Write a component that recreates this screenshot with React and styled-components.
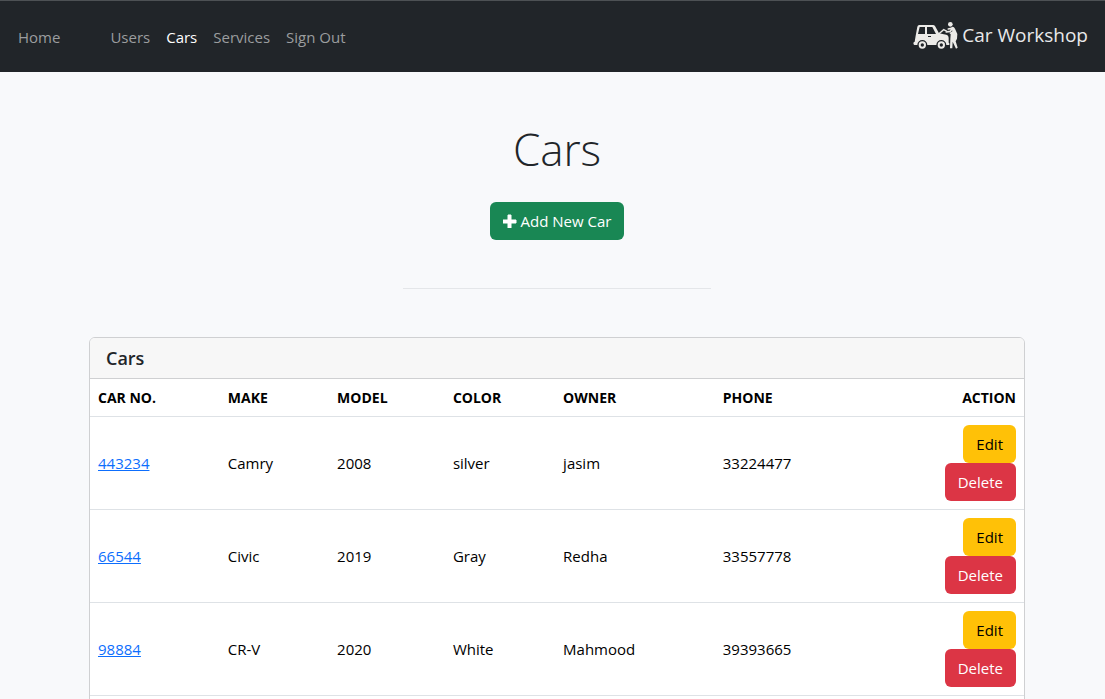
import React from "react";
import styled, { createGlobalStyle } from "styled-components";

const GlobalStyle = createGlobalStyle`
  *, *::before, *::after { box-sizing: border-box; }
  body {
    margin: 0;
    background: #f8f9fb;
    color: #212529;
    font-family: "Segoe UI", "Open Sans", "Noto Sans", sans-serif;
    font-size: 15px;
    line-height: 24px;
    overflow-x: hidden;
  }
`;

const Navbar = styled.nav`
  display: flex;
  align-items: center;
  justify-content: space-between;
  height: 72px;
  padding: 0 17px 0 10px;
  background: #212529;
  border-top: 1px solid #4d5154;
`;

const NavList = styled.ul`
  display: flex;
  margin: 0;
  padding: 0;
  list-style: none;
`;

const NavItem = styled.li`
  margin-right: ${(p) => (p.$spaced ? "34px" : "0")};
`;

const NavLink = styled.a`
  display: block;
  padding: 8px;
  color: ${(p) => (p.$active ? "#ffffff" : "#9b9d9f")};
  text-decoration: none;
`;

const Brand = styled.a`
  display: flex;
  align-items: center;
  gap: 4px;
  padding-bottom: 4px;
  color: #e9e9ea;
  font-size: 19px;
  line-height: 28px;
  text-decoration: none;
`;

const Main = styled.main`
  padding: 48px 80px 48px 89px;
`;

const Hero = styled.header`
  display: flex;
  flex-direction: column;
  align-items: center;
`;

const Title = styled.h1`
  margin: 0 0 24px;
  font-size: 44px;
  font-weight: 300;
  line-height: 58px;
`;

const Button = styled.button`
  display: inline-flex;
  align-items: center;
  justify-content: center;
  gap: 4px;
  height: 38px;
  padding: 0 13px;
  border: 0;
  border-radius: 6px;
  background: ${(p) => p.$bg};
  color: ${(p) => p.$color || "#ffffff"};
  font: inherit;
  cursor: pointer;
`;

const Divider = styled.hr`
  width: 33%;
  margin: 48px 0;
  border: 0;
  border-top: 1px solid #e4e6e9;
`;

const Card = styled.section`
  overflow: hidden;
  padding-bottom: 16px;
  border: 1px solid #cfd0d2;
  border-radius: 6px;
  background: #ffffff;
`;

const CardTitle = styled.h2`
  margin: 0;
  padding: 8px 16px;
  border-bottom: 1px solid #cfd0d2;
  background: #f7f7f7;
  font-size: 18px;
  font-weight: 600;
  line-height: 24px;
`;

const Table = styled.table`
  width: 100%;
  border-collapse: collapse;
  table-layout: fixed;
  color: #000000;
`;

const Col = styled.col`
  width: ${(p) => p.$width};
`;

const HeadCell = styled.th`
  padding: 7px 8px 6px;
  border-bottom: 1px solid #dee2e6;
  font-size: 14px;
  font-weight: 700;
  text-align: ${(p) => (p.$end ? "right" : "left")};
`;

const Cell = styled.td`
  padding: 8px;
  border-bottom: 1px solid #dee2e6;
`;

const CarLink = styled.a`
  color: #0d6efd;
`;

const Actions = styled.div`
  display: flex;
  flex-direction: column;
  align-items: flex-end;
`;

const WorkshopLogo = () => (
  <svg width="46" height="28" viewBox="35 36 138 84" aria-hidden="true">
    <path
      fill="#ecebe8"
      fillRule="evenodd"
      d="M57 48H98Q102 48 104 51L116 73L138 77Q145 79 145 86V101L147 103V108H138A15 15 0 0 0 108 108H81A15 15 0 0 0 51 108H42Q39 107 39 101L43 98L46 80L51 53Q52 48 57 48ZM58 54L53 75H74V54ZM80 54V75H107L96 54ZM83 81V84H92V81Z"
    />
    <circle cx="66" cy="108" r="8" fill="none" stroke="#ecebe8" strokeWidth="6" />
    <circle cx="123" cy="108" r="8" fill="none" stroke="#ecebe8" strokeWidth="6" />
    <path d="M115 75L130 62L140 67" fill="none" stroke="#ecebe8" strokeWidth="4" />
    <circle cx="150" cy="46" r="7" fill="#ecebe8" />
    <path
      fill="none"
      stroke="#ecebe8"
      strokeWidth="5"
      strokeLinecap="round"
      strokeLinejoin="round"
      d="M157 58L150 67L138 69M144 60L153 58"
    />
    <path
      fill="#ecebe8"
      d="M153 54Q161 52 164 59L171 75L170 89L166 97L172 116L167 119L157 98L156 118H149L150 89L151 76L147 72L156 67Z"
    />
  </svg>
);

const PlusIcon = () => (
  <svg width="14" height="14" viewBox="0 0 14 14" aria-hidden="true">
    <path d="M5 1h3v5h5v3H8v5H5V9H0V6h5z" fill="#fff" stroke="#fff" strokeLinejoin="round" />
  </svg>
);

const links = ["Home", "Users", "Cars", "Services", "Sign Out"];

const columns = [
  { label: "CAR NO.", width: "13.9%" },
  { label: "MAKE", width: "11.7%" },
  { label: "MODEL", width: "12.4%" },
  { label: "COLOR", width: "11.8%" },
  { label: "OWNER", width: "17.1%" },
  { label: "PHONE", width: "20%" },
  { label: "ACTION", width: "13.1%" },
];

const cars = [
  ["443234", "Camry", "2008", "silver", "jasim", "33224477"],
  ["66544", "Civic", "2019", "Gray", "Redha", "33557778"],
  ["98884", "CR-V", "2020", "White", "Mahmood", "39393665"],
];

export default function App() {
  return (
    <>
      <GlobalStyle />
      <Navbar>
        <NavList>
          {links.map((label) => (
            <NavItem key={label} $spaced={label === "Home"}>
              <NavLink href="#" $active={label === "Cars"}>{label}</NavLink>
            </NavItem>
          ))}
        </NavList>
        <Brand href="#">
          <WorkshopLogo />
          Car Workshop
        </Brand>
      </Navbar>
      <Main>
        <Hero>
          <Title>Cars</Title>
          <Button type="button" $bg="#198754">
            <PlusIcon />
            Add New Car
          </Button>
          <Divider />
        </Hero>
        <Card>
          <CardTitle>Cars</CardTitle>
          <Table>
            <colgroup>
              {columns.map((c) => <Col key={c.label} $width={c.width} />)}
            </colgroup>
            <thead>
              <tr>
                {columns.map((c) => (
                  <HeadCell key={c.label} scope="col" $end={c.label === "ACTION"}>{c.label}</HeadCell>
                ))}
              </tr>
            </thead>
            <tbody>
              {cars.map(([number, ...rest]) => (
                <tr key={number}>
                  <Cell><CarLink href="#">{number}</CarLink></Cell>
                  {rest.map((value) => <Cell key={value}>{value}</Cell>)}
                  <Cell>
                    <Actions>
                      <Button type="button" $bg="#ffc107" $color="#000000">Edit</Button>
                      <Button type="button" $bg="#dc3545">Delete</Button>
                    </Actions>
                  </Cell>
                </tr>
              ))}
            </tbody>
          </Table>
        </Card>
      </Main>
    </>
  );
}
